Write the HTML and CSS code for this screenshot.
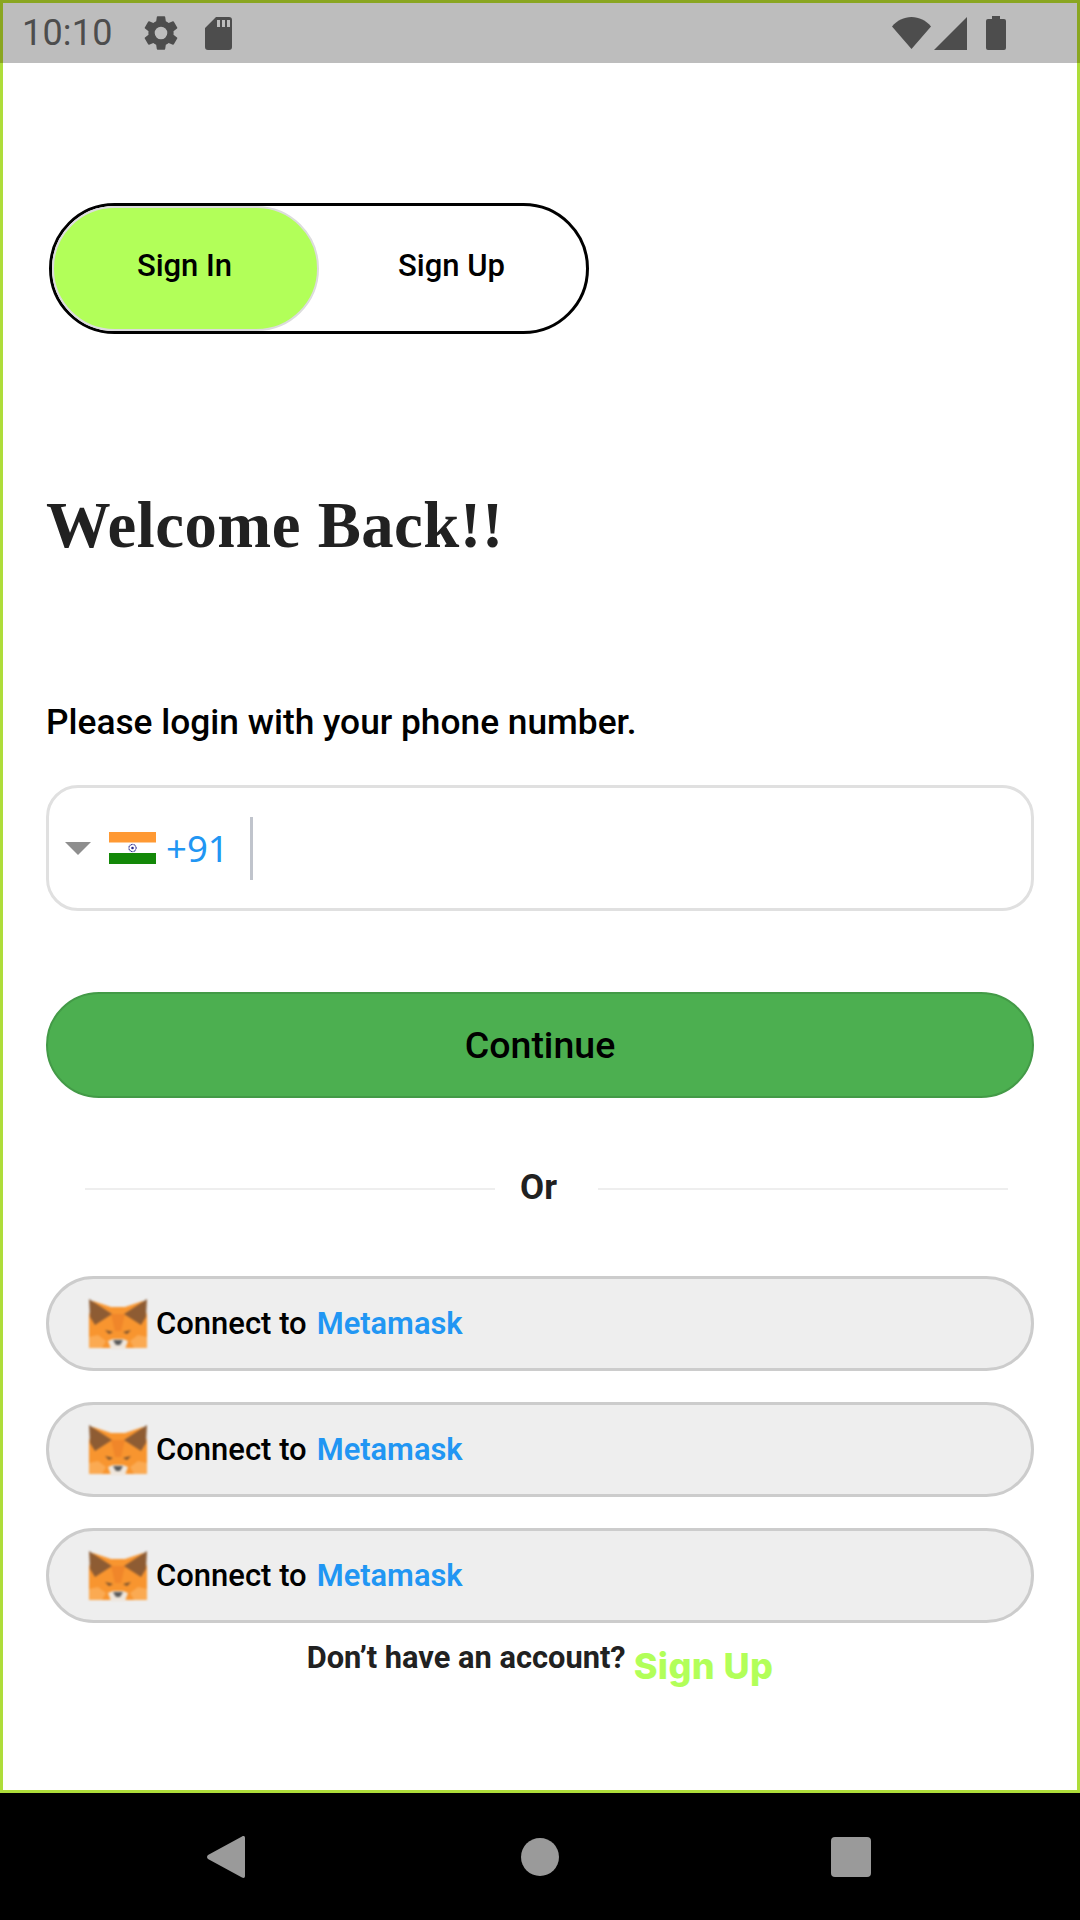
FILE: index.html
```html
<!DOCTYPE html>
<html lang="en">
<head>
<meta charset="utf-8">
<title>Sign In</title>
<link rel="stylesheet" href="styles.css">
</head>
<body>
<div class="phone">
  <header class="status">
    <div class="status-left">
      <span class="time">10:10</span>
      <svg class="ic-gear" viewBox="0 0 24 24"><path d="M19.14 12.94c.04-.3.06-.61.06-.94s-.02-.64-.07-.94l2.03-1.58a.49.49 0 0 0 .12-.61l-1.92-3.32a.49.49 0 0 0-.59-.22l-2.39.96a7 7 0 0 0-1.62-.94l-.36-2.54a.48.48 0 0 0-.48-.41h-3.84a.47.47 0 0 0-.47.41l-.36 2.54c-.59.24-1.13.57-1.62.94l-2.39-.96a.49.49 0 0 0-.59.22L2.74 8.87a.48.48 0 0 0 .12.61l2.03 1.58c-.05.3-.09.63-.09.94s.02.64.07.94l-2.03 1.58a.49.49 0 0 0-.12.61l1.92 3.32c.12.22.37.29.59.22l2.39-.96c.5.38 1.03.7 1.62.94l.36 2.54c.05.24.24.41.48.41h3.84c.24 0 .44-.17.47-.41l.36-2.54c.59-.24 1.13-.56 1.62-.94l2.39.96c.22.08.47 0 .59-.22l1.92-3.32a.48.48 0 0 0-.12-.61zM12 15.6a3.6 3.6 0 1 1 0-7.2 3.6 3.6 0 0 1 0 7.2z"/></svg>
      <svg class="ic-sd" viewBox="0 0 27 33"><path fill-rule="evenodd" d="M11 0h13a3 3 0 0 1 3 3v27a3 3 0 0 1-3 3H3a3 3 0 0 1-3-3V11zM12 3v7h3V3zM17 3v7h3V3zM22 3v7h3V3z"/></svg>
    </div>
    <div class="status-right">
      <svg class="ic-wifi" viewBox="0 0 39 32"><path d="M0 9.500C5 3.500 12 0 19.500 0S34 3.500 39 9.500L19.500 32z"/></svg>
      <svg class="ic-signal" viewBox="0 0 33 33"><path d="M33 0v33H0z"/></svg>
      <svg class="ic-batt" viewBox="0 0 20 34"><path d="M6 0h8v3h4a2 2 0 0 1 2 2v27a2 2 0 0 1-2 2H2a2 2 0 0 1-2-2V5a2 2 0 0 1 2-2h4z"/></svg>
    </div>
  </header>

  <main class="app">
    <div class="toggle">
      <button class="tab tab-active">Sign In</button>
      <button class="tab">Sign Up</button>
    </div>

    <h1 class="title">Welcome Back!!</h1>
    <p class="lead">Please login with your phone number.</p>

    <div class="phone-field">
      <span class="caret"></span>
      <svg class="flag" viewBox="0 0 47 32">
        <rect width="47" height="32" fill="#fff"/>
        <rect width="47" height="10.500" fill="#ff9933"/>
        <rect y="21" width="47" height="11" fill="#138808"/>
        <circle cx="23.500" cy="16" r="3.600" fill="none" stroke="#2a2a8c" stroke-width="1.100" stroke-dasharray="1 .5"/>
        <circle cx="23.500" cy="16" r="1.300" fill="#2a2a8c"/>
      </svg>
      <span class="dial">+91</span>
      <span class="sep"></span>
    </div>

    <button class="continue">Continue</button>

    <div class="or"><span class="or-line"></span><span class="or-text">Or</span><span class="or-line"></span></div>

    <div class="wallets">
      <button class="wallet">
        <svg class="fox" viewBox="0 0 58 50"><use href="#fox-shape"/></svg>
        <span class="wallet-label">Connect to</span><span class="wallet-name">Metamask</span>
      </button>
      <button class="wallet">
        <svg class="fox" viewBox="0 0 58 50"><use href="#fox-shape"/></svg>
        <span class="wallet-label">Connect to</span><span class="wallet-name">Metamask</span>
      </button>
      <button class="wallet">
        <svg class="fox" viewBox="0 0 58 50"><use href="#fox-shape"/></svg>
        <span class="wallet-label">Connect to</span><span class="wallet-name">Metamask</span>
      </button>
    </div>

    <div class="foot"><span class="foot-q">Don’t have an account?</span><span class="foot-link">Sign Up</span></div>
  </main>

  <nav class="navbar">
    <svg class="nav-back" viewBox="0 0 38 42"><path d="M35 .5c1.500-1 3-.5 3 1.500v38c0 2-1.500 2.500-3 1.500L1 23c-1.300-1-1.300-3 0-4z"/></svg>
    <span class="nav-home"></span>
    <span class="nav-recent"></span>
  </nav>
</div>

<svg class="defs" width="0" height="0" aria-hidden="true">
  <defs>
    <g id="fox-shape">
      <path fill="#f8952f" d="M0 16 4 2 22 8H36L54 2 58 16V49H36L29 50 22 49H0z"/>
      <path fill="#fbaa52" d="M0 38 9 36 17 42 13 49H0zM58 38 49 36 41 42 45 49H58z"/>
      <path fill="#f0862a" d="M22 15H36L32 32H26z"/>
      <path fill="#8e5c33" d="M0 0 23 15 6 26 1 18zM58 0 35 15 52 26 57 18z"/>
      <path fill="#75502f" d="M16 31 24 33 20 35zM42 31 34 33 38 35z"/>
      <path fill="#eee6dc" d="M19 42 24 40H34L39 42 36 50H22z"/>
      <path fill="#5a5a5a" d="M24 41H34L31 46H27z"/>
    </g>
  </defs>
</svg>
</body>
</html>
```

FILE: styles.css
```css
* { box-sizing: border-box; }
html, body { margin: 0; padding: 0; }
body { width: 1080px; height: 1920px; background: #000; font-family: Roboto, "Liberation Sans", sans-serif; overflow: hidden; }
button { font-family: inherit; cursor: pointer; }
.defs { position: absolute; }
.phone { display: flex; flex-direction: column; width: 1080px; height: 1920px; }

/* status bar */
.status { flex: 0 0 63px; display: flex; justify-content: space-between; align-items: center; background: #bdbdbd; border: 3px solid #8aa621; border-bottom: 0; padding: 0 71px 0 19px; color: #4d4d4d; }
.status-left, .status-right { display: flex; align-items: center; }
.status svg { fill: #4d4d4d; display: block; }
.time { font-size: 36px; line-height: 40px; width: 118px; letter-spacing: .2px; }
.ic-gear { width: 42px; height: 42px; margin-right: 23px; }
.ic-sd { width: 27px; height: 33px; }
.ic-wifi { width: 39px; height: 32px; margin-right: 3px; }
.ic-signal { width: 33px; height: 33px; margin-right: 19px; }
.ic-batt { width: 20px; height: 34px; }

/* main */
.app { flex: 0 0 1730px; background: #fff; border: 3px solid #aedd3a; border-top: 0; padding: 140px 43px 0 43px; display: flex; flex-direction: column; }
.toggle { width: 540px; height: 131px; margin-left: 3px; border: 3px solid #000; border-radius: 66px; display: flex; background: #fff; }
.tab { flex: 0 0 267px; border: 0; background: none; font-size: 31px; font-weight: 500; color: #000; padding: 0 2px 7px 0; border-radius: 63px; }
.tab-active { background: #b2ff59; border: 2px solid #dcdcdc; }
.title { margin: 151px 0 0; font-family: "Liberation Serif", serif; font-weight: 700; font-size: 64.700px; line-height: 80px; color: #212121; letter-spacing: .5px; }
.lead { margin: 137px 0 0; font-size: 35.300px; line-height: 40px; font-weight: 500; color: #000; }

.phone-field { margin-top: 43px; height: 126px; border: 3px solid #e0e0e0; border-radius: 32px; background: #fff; display: flex; align-items: center; padding-left: 16px; }
.caret { width: 0; height: 0; border-style: solid; border-width: 13px 13px 0; border-color: #8e8e8e transparent transparent; margin-right: 18px; }
.flag { width: 47px; height: 32px; margin-right: 10px; }
.dial { font-family: "Noto Sans", sans-serif; font-size: 36.500px; color: #2196f3; width: 60px; margin-right: 24px; }
.sep { width: 3px; height: 63px; background: #c0c4cc; }

.continue { margin-top: 81px; height: 106px; border: 2px solid #439a47; border-radius: 53px; background: #4caf50; font-size: 37.500px; font-weight: 500; color: #000; padding: 0; }

.or { margin-top: 69px; display: flex; align-items: center; padding: 0 26px 0 39px; height: 40px; }
.or-line { flex: 1; height: 2px; background: #eeeeee; margin-top: 4px; }
.or-text { font-size: 35px; font-weight: 700; color: #212121; margin: 0 41px 0 25px; }

.wallets { margin-top: 69px; display: flex; flex-direction: column; gap: 31px; }
.wallet { height: 95px; border: 3px solid #cccccc; border-radius: 48px; background: #eeeeee; display: flex; align-items: center; padding: 0 0 0 40px; }
.fox { width: 58px; height: 50px; margin-right: 9px; filter: blur(.8px); }
.wallet-label { font-size: 31px; font-weight: 500; color: #000; margin-right: 10px; }
.wallet-name { font-size: 30.800px; font-weight: 600; color: #2196f3; }

.foot { margin-top: 14px; display: flex; justify-content: center; align-items: flex-start; gap: 8px; }
.foot-q { font-size: 30.800px; font-weight: 700; color: #212121; line-height: 40px; margin-top: 1px; }
.foot-link { font-family: Inter, sans-serif; font-size: 36px; font-weight: 800; color: #b2ff59; line-height: 44px; margin-top: 7px; letter-spacing: .4px; }

/* nav */
.navbar { flex: 1; background: #000; position: relative; }
.navbar svg, .nav-home, .nav-recent { position: absolute; }
.nav-back { left: 207px; top: 43px; width: 38px; height: 42px; fill: #9a9a9a; }
.nav-home { left: 521px; top: 45px; width: 38px; height: 38px; border-radius: 50%; background: #9a9a9a; }
.nav-recent { left: 831px; top: 44px; width: 40px; height: 40px; border-radius: 4px; background: #9a9a9a; }
```
